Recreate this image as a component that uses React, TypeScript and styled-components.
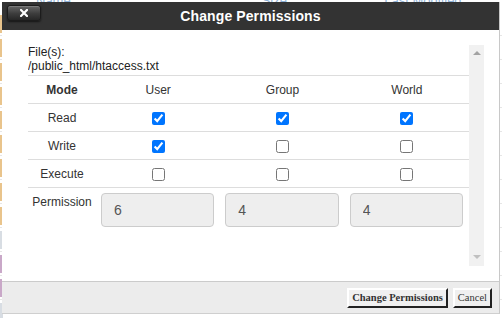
import React from "react";
import styled, { createGlobalStyle } from "styled-components";

const GlobalStyle = createGlobalStyle`
  html, body {
    margin: 0;
    padding: 0;
    background: #f3f3f3;
    font-family: "Liberation Sans", Arial, sans-serif;
  }
`;

const files = [
    { color: "#e9c48c" },
    { color: "#e9c48c" },
    { color: "#e9c48c" },
    { color: "#e9c48c" },
    { color: "#e9c48c" },
    { color: "#e9c48c" },
    { color: "#e9c48c" },
    { color: "#e9c48c" },
    { color: "#e9c48c" },
    { color: "#d8dde3" },
    { color: "#c9a8c8" },
    { color: "#c9a8c8" },
    { color: "#d8dde3" },
];

const modes = ["Read", "Write", "Execute"];
const whoList = ["User", "Group", "World"];
const initial = [
    [true, true, true],
    [true, false, false],
    [false, false, false],
];

const App = () => {
    const [perms, setPerms] = React.useState(initial);

    const toggle = (row: number, col: number) => {
        setPerms(p => p.map((r, i) => r.map((v, j) => (i === row && j === col ? !v : v))));
    };

    const octal = whoList.map((_, col) =>
        perms.reduce((sum, r, i) => sum + (r[col] ? [4, 2, 1][i] : 0), 0)
    );

    return (
        <Page>
            <GlobalStyle />
            <FileHeader>
                <HeaderLabel width={230}>Name</HeaderLabel>
                <HeaderLabel width={125}>Size</HeaderLabel>
                <HeaderLabel width={120}>Last Modified</HeaderLabel>
            </FileHeader>
            {files.map((f, i) => (
                <FileRow key={i}>
                    <Marker color={f.color} />
                </FileRow>
            ))}

            <Dialog>
                <TitleBar>
                    <CloseButton aria-label="Close">
                        <svg width="8" height="8" viewBox="0 0 8 8">
                            <path d="M1 1 L7 7 M7 1 L1 7" stroke="#fff" strokeWidth="2.2" strokeLinecap="square" />
                        </svg>
                    </CloseButton>
                    <Title>Change Permissions</Title>
                </TitleBar>
                <Body>
                    <ScrollArea>
                        <FileInfo>
                            <div>File(s):</div>
                            <div>/public_html/htaccess.txt</div>
                        </FileInfo>
                        <Table>
                            <colgroup>
                                <col style={{ width: 68 }} />
                                <col />
                                <col />
                                <col />
                            </colgroup>
                            <tbody>
                                <Row>
                                    <HeadCell>Mode</HeadCell>
                                    {whoList.map(w => (
                                        <Cell key={w}>{w}</Cell>
                                    ))}
                                </Row>
                                {modes.map((m, i) => (
                                    <Row key={m}>
                                        <Cell>{m}</Cell>
                                        {whoList.map((w, j) => (
                                            <Cell key={w}>
                                                <Check
                                                    type="checkbox"
                                                    checked={perms[i][j]}
                                                    onChange={() => toggle(i, j)}
                                                />
                                            </Cell>
                                        ))}
                                    </Row>
                                ))}
                                <tr>
                                    <LabelCell>Permission</LabelCell>
                                    {octal.map((v, j) => (
                                        <InputCell key={j}>
                                            <ValueInput value={v} readOnly />
                                        </InputCell>
                                    ))}
                                </tr>
                            </tbody>
                        </Table>
                    </ScrollArea>
                    <Scrollbar>
                        <Arrow up />
                        <Arrow />
                    </Scrollbar>
                </Body>
                <Footer>
                    <FooterButton bold>Change Permissions</FooterButton>
                    <FooterButton>Cancel</FooterButton>
                </Footer>
            </Dialog>
        </Page>
    );
};

const Page = styled.div`
    position: relative;
    width: 502px;
    height: 318px;
    overflow: hidden;
    background: #f3f3f3;
`;

const FileHeader = styled.div`
    display: flex;
    height: 24px;
    margin-top: -12px;
    padding-left: 36px;
    align-items: center;
    background: #fff;
`;

const HeaderLabel = styled.div<{ width: number }>`
    width: ${({ width }) => width}px;
    font-size: 13px;
    color: #8fb2d8;
`;

const FileRow = styled.div`
    height: 23px;
    display: flex;
    align-items: center;
    border-bottom: 1px solid #e6e6e6;
    background: #fff;
`;

const Marker = styled.div<{ color: string }>`
    width: 3px;
    height: 18px;
    background: ${({ color }) => color};
`;

const Dialog = styled.div`
    position: absolute;
    left: 2px;
    top: 2px;
    width: 497px;
    height: 311px;
    display: flex;
    flex-direction: column;
    background: #fff;
    border-right: 1px solid #c8c8c8;
    border-bottom: 1px solid #cfcfcf;
`;

const TitleBar = styled.div`
    position: relative;
    height: 28px;
    flex: none;
    background: #333;
    display: flex;
    align-items: center;
    justify-content: center;
`;

const CloseButton = styled.button`
    position: absolute;
    left: 5px;
    top: 3px;
    width: 34px;
    height: 16px;
    padding: 0;
    display: flex;
    align-items: center;
    justify-content: center;
    border: 1px solid #1c1c1c;
    border-radius: 3px;
    background: linear-gradient(#666, #3c3c3c 55%, #262626);
    box-shadow: 0 1px 2px rgba(0, 0, 0, 0.6), inset 0 1px 0 rgba(255, 255, 255, 0.15);
    cursor: pointer;
`;

const Title = styled.div`
    color: #fff;
    font-weight: bold;
    font-size: 14px;
    letter-spacing: 0.1px;
`;

const Body = styled.div`
    flex: 1;
    display: flex;
    padding: 15px 15px 15px 26px;
    min-height: 0;
`;

const ScrollArea = styled.div`
    flex: 1;
    overflow: hidden;
    color: #333;
    font-size: 12px;
`;

const FileInfo = styled.div`
    line-height: 14px;
    margin-bottom: 2px;
    color: #222;
`;

const Table = styled.table`
    width: 100%;
    table-layout: fixed;
    border-collapse: collapse;
    border-top: 1px solid #ddd;
`;

const Row = styled.tr`
    height: 28px;
    border-bottom: 1px solid #ddd;
`;

const Cell = styled.td`
    padding: 0;
    text-align: center;
    vertical-align: middle;
    color: #333;
`;

const HeadCell = styled(Cell)`
    font-weight: bold;
`;

const LabelCell = styled.td`
    padding: 7px 0 0;
    text-align: center;
    vertical-align: top;
    line-height: 14px;
    color: #333;
`;

const InputCell = styled.td`
    padding: 5px 6px 0 5px;
    vertical-align: top;
`;

const Check = styled.input`
    width: 13px;
    height: 13px;
    margin: 2px 0 0;
    vertical-align: middle;
`;

const ValueInput = styled.input`
    box-sizing: border-box;
    width: 100%;
    height: 34px;
    padding: 0 12px;
    border: 1px solid #ccc;
    border-radius: 4px;
    background: #eee;
    color: #555;
    font-family: "Liberation Sans", Arial, sans-serif;
    font-size: 14px;
    outline: none;
`;

const Scrollbar = styled.div`
    width: 15px;
    flex: none;
    background: #f1f1f1;
    display: flex;
    flex-direction: column;
    justify-content: space-between;
    align-items: center;
    padding: 6px 0 7px;
    box-sizing: border-box;
`;

const Arrow = styled.div<{ up?: boolean }>`
    width: 0;
    height: 0;
    border-left: 4px solid transparent;
    border-right: 4px solid transparent;
    ${({ up }) =>
        up ? "border-bottom: 4px solid #a3a3a3;" : "border-top: 4px solid #c0c0c0;"}
`;

const Footer = styled.div`
    height: 31px;
    flex: none;
    border-top: 1px solid #cbcbcb;
    background: #ececec;
    display: flex;
    justify-content: flex-end;
    align-items: center;
    gap: 5px;
    padding-right: 7px;
`;

const FooterButton = styled.button<{ bold?: boolean }>`
    height: 20px;
    padding: 0 3px;
    font-family: "Liberation Serif", "Times New Roman", serif;
    font-size: 10.5px;
    font-weight: ${({ bold }) => (bold ? "bold" : "normal")};
    color: #333;
    background: #f0f0f0;
    border: 2px outset #e0e0e0;
    border-right-color: #777;
    border-bottom-color: #777;
    border-top-color: #fff;
    border-left-color: #fff;
    cursor: pointer;
`;

export default App;
